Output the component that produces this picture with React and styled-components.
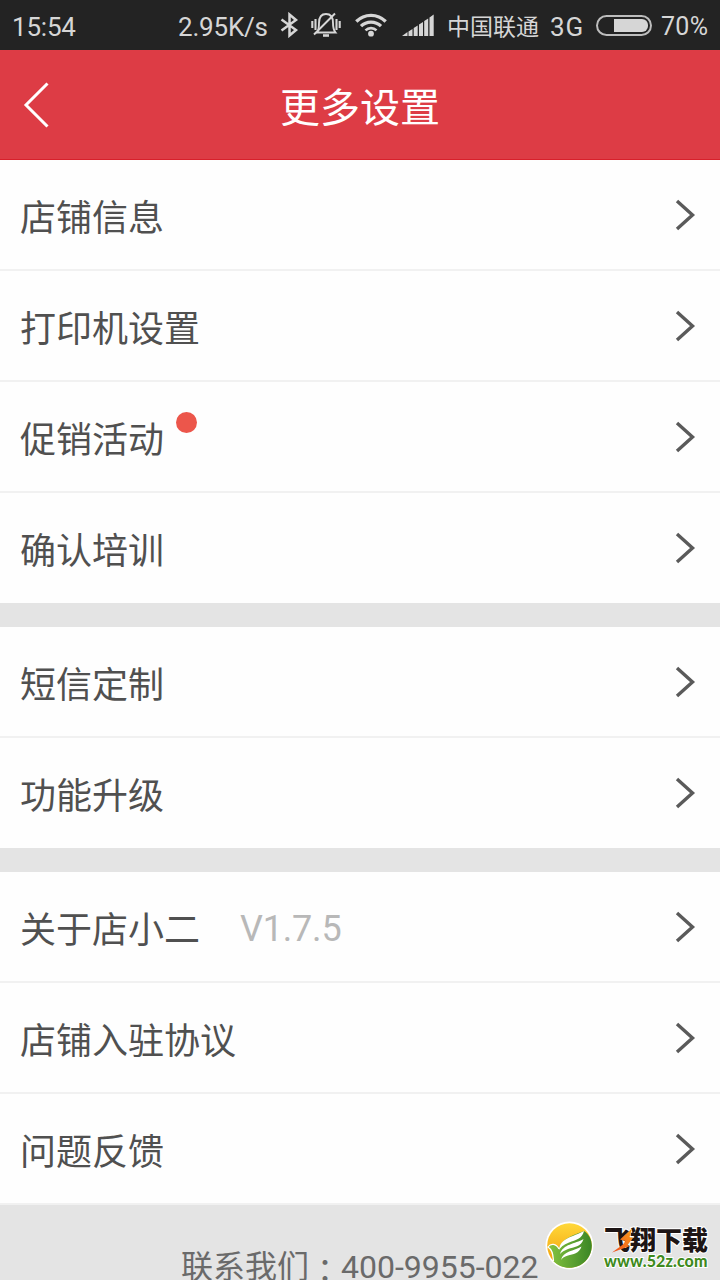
import styled, { createGlobalStyle } from "styled-components";

const GlobalStyle = createGlobalStyle`
  * {
    box-sizing: border-box;
  }
  body {
    margin: 0;
    background-color: #e4e4e4;
  }
`;

const Container = styled.div`
  position: relative;
  display: flex;
  flex-direction: column;
  width: 720px;
  height: 1280px;
  overflow: hidden;
  background-color: #e4e4e4;
  font-family: Roboto, "Noto Sans CJK SC", sans-serif;
  color: #505050;
`;

const StatusBar = styled.div`
  display: flex;
  align-items: center;
  flex-shrink: 0;
  height: 50px;
  padding-left: 12px;
  background-color: #232323;
  color: #d6d6d6;
`;

const StatusText = styled.span`
  flex-shrink: 0;
  width: ${(props) => props.$width}px;
  padding-top: ${(props) => props.$drop || 0}px;
  font-size: ${(props) => props.$size || 26}px;
  letter-spacing: ${(props) => props.$spacing || 0}px;
  line-height: 30px;
  white-space: nowrap;
`;

const StatusIcon = styled.svg`
  flex-shrink: 0;
  margin-right: ${(props) => props.$gap}px;
`;

const Battery = styled.div`
  display: flex;
  justify-content: flex-end;
  flex-shrink: 0;
  width: 56px;
  height: 21px;
  margin-right: 9px;
  padding: 2px;
  border: 2px solid #bdbdbd;
  border-radius: 11px;
`;

const BatteryLevel = styled.div`
  width: 34px;
  height: 13px;
  background-color: #d6d6d6;
  border-radius: 0 6px 6px 0;
`;

const Header = styled.header`
  display: grid;
  grid-template-columns: 100px 1fr 100px;
  align-items: center;
  flex-shrink: 0;
  height: 110px;
  background-color: #dd3c45;
  border-bottom: 1px solid #d8202b;
  color: white;
`;

const BackButton = styled.button`
  display: flex;
  border: none;
  padding: 0 0 0 22px;
  background: none;
  cursor: pointer;
`;

const Title = styled.h1`
  margin: 0;
  padding-top: 8px;
  font-size: 40px;
  font-weight: 400;
  line-height: 60px;
  text-align: center;
`;

const Group = styled.div`
  flex-shrink: 0;
  margin-bottom: ${(props) => (props.$last ? 0 : 24)}px;
  background-color: #fefefe;
`;

const Row = styled.div`
  display: flex;
  align-items: center;
  height: ${(props) => props.$height}px;
  padding: 0 24px 0 20px;
  border-bottom: ${(props) => (props.$line ? "2px solid #f1f1f1" : "none")};
`;

const Label = styled.span`
  padding-top: 8px;
  font-size: 36px;
  line-height: 54px;
`;

const Dot = styled.i`
  align-self: flex-start;
  width: 21px;
  height: 21px;
  margin: 30px 0 0 12px;
  border-radius: 50%;
  background-color: #ec564b;
`;

const Version = styled.span`
  margin-left: 40px;
  padding-top: 4px;
  font-size: 36px;
  letter-spacing: -0.2px;
  color: #b8b8b8;
`;

const Arrow = styled.svg`
  margin-left: auto;
`;

const Contact = styled.div`
  display: flex;
  padding-left: 181px;
  font-size: 32px;
  line-height: 48px;
  color: #6a6a6a;
  white-space: nowrap;
`;

const ContactLabel = styled.span`
  padding-top: 38px;
`;

const Colon = styled.span`
  padding-top: 39px;
  font-family: "Noto Sans CJK TC", sans-serif;
`;

const Phone = styled.span`
  padding-top: 38px;
`;

const Watermark = styled.div`
  position: absolute;
  left: 545px;
  top: 1221px;
  display: flex;
`;

const WatermarkText = styled.div`
  display: flex;
  flex-direction: column;
  margin-left: 10px;
  padding-top: 5px;
`;

const SiteName = styled.div`
  position: relative;
  height: 26px;
  font-family: "Noto Sans CJK SC", sans-serif;
  font-size: 26px;
  font-weight: 900;
  line-height: 26px;
  color: #1d1515;
  white-space: nowrap;
  paint-order: stroke fill;
  -webkit-text-stroke: 2px white;
`;

const Flash = styled.svg`
  position: absolute;
  left: 7px;
  top: 2px;
`;

const SiteUrl = styled.div`
  font-family: Lato, sans-serif;
  font-size: 16px;
  font-weight: 900;
  line-height: 18px;
  letter-spacing: 0.1px;
  color: #3f8a1d;
  white-space: nowrap;
  paint-order: stroke fill;
  -webkit-text-stroke: 2px white;
`;

const groups = [
  [
    { label: "店铺信息", height: 111, line: true },
    { label: "打印机设置", height: 111, line: true },
    { label: "促销活动", height: 111, line: true, dot: true },
    { label: "确认培训", height: 110 },
  ],
  [
    { label: "短信定制", height: 111, line: true },
    { label: "功能升级", height: 110 },
  ],
  [
    { label: "关于店小二", height: 111, line: true, version: "V1.7.5" },
    { label: "店铺入驻协议", height: 111, line: true },
    { label: "问题反馈", height: 111, line: true },
  ],
];

const StatusIcons = () => (
  <>
    <StatusIcon $gap={12} width="19" height="26" viewBox="0 0 19 26" fill="none" stroke="#d6d6d6" strokeWidth="2.5">
      <path d="M1.5 7.5 L16 18 L9.5 23.5 V2.5 L16 8 L1.5 18.5" />
    </StatusIcon>
    <StatusIcon $gap={14} width="30" height="26" viewBox="0 0 30 26" fill="none" stroke="#d6d6d6" strokeWidth="1.9">
      <path d="M6 20.5 C8 18 8 16 8 11 C8 5 11 2 15 2 C19 2 22 5 22 11 C22 16 22.5 18 24.5 20.5 Z" />
      <path d="M3 22.5 L24 1.5" />
      <path d="M12 23.5 H18" strokeWidth="2.6" />
      <path d="M1.3 9 V16 M4.5 7 V18 M25.5 7 V18 M28.7 9 V16" strokeWidth="2.1" />
    </StatusIcon>
    <StatusIcon $gap={15} width="32" height="24" viewBox="0 0 32 24" fill="none" stroke="#d6d6d6" strokeWidth="3.3">
      <path d="M1.3 8.5 C9.5 0.3 22.5 0.3 30.7 8.5" />
      <path d="M6 13.2 C11.5 7.7 20.5 7.7 26 13.2" />
      <path d="M10.5 17.4 C13.5 14.3 18.5 14.3 21.5 17.4" strokeWidth="2.6" />
      <circle cx="16" cy="20.7" r="2.9" fill="#d6d6d6" stroke="none" />
    </StatusIcon>
    <StatusIcon $gap={13} width="32" height="22" viewBox="0 0 32 22" fill="#d6d6d6">
      <path d="M0 22 L5.5 18 V22 Z M6.5 17.5 L10.5 15 V22 H6.5 Z M11.7 14 L15.7 11.5 V22 H11.7 Z M17 10.5 L21 8 V22 H17 Z M22.2 7 L26.2 4.5 V22 H22.2 Z M27.5 3.5 L31.7 0.5 V22 H27.5 Z" />
    </StatusIcon>
  </>
);

const Logo = () => (
  <svg width="49" height="49" viewBox="0 0 49 49">
    <defs>
      <linearGradient id="sun" x1="0" y1="0" x2="0" y2="1">
        <stop offset="0" stopColor="#ffd83a" />
        <stop offset="1" stopColor="#f19a05" />
      </linearGradient>
      <linearGradient id="leaf" x1="0" y1="0" x2="1" y2="0">
        <stop offset="0" stopColor="#86c440" />
        <stop offset="1" stopColor="#3b8625" />
      </linearGradient>
      <linearGradient id="flash" x1="1" y1="0" x2="0" y2="1">
        <stop offset="0" stopColor="#f9a11b" />
        <stop offset="1" stopColor="#ee4a1c" />
      </linearGradient>
    </defs>
    <circle cx="24.5" cy="24.5" r="24" fill="white" />
    <circle cx="24.5" cy="24.5" r="22.3" fill="url(#sun)" />
    {/* bird body, running down into the leaf */}
    <path d="M3 26 C6 22 11 22.5 14 28 C16 18 26 15 39 10 C44 13 46.8 19 46.8 24.5 C46.8 37 37 46.8 24.5 46.8 C18 46.8 12 44 8.5 40 C8 35 8 29 3 26 Z" fill="url(#leaf)" />
    <path d="M8.5 40 C8 35 8 29 3 26 C6 22 11 22.5 14 28" fill="none" stroke="white" strokeWidth="1.2" />
    {/* feathers */}
    <path d="M14 29 C15 17 28 16 39 10 C37 18 31 19 24 21.5 C18 24 16 26 14 29 Z" fill="white" />
    <path d="M15 33 C18 23 30 23 38.5 18 C36 26 29 26 23 28 C19 29.5 17 31 15 33 Z" fill="white" />
    <path d="M16 39 C18 30 29 30 36.5 25.5 C34 33 28 33 23 34.5 C19 36 17 37 16 39 Z" fill="white" />
  </svg>
);

const App = () => {
  return (
    <Container>
      <GlobalStyle />
      <StatusBar>
        <StatusText $width={166} $drop={3} $spacing={-0.2}>15:54</StatusText>
        <StatusText $width={102} $drop={3} $spacing={-0.2}>2.95K/s</StatusText>
        <StatusIcons />
        <StatusText $width={103} $size={23} $drop={6}>中国联通</StatusText>
        <StatusText $width={46} $drop={3} $spacing={0.8}>3G</StatusText>
        <Battery>
          <BatteryLevel />
        </Battery>
        <StatusText $width={50} $size={25} $drop={3} $spacing={0.3}>70%</StatusText>
      </StatusBar>
      <Header>
        <BackButton aria-label="返回">
          <svg width="28" height="46" viewBox="0 0 28 46" fill="none" stroke="white" strokeWidth="3">
            <path d="M25.5 1.5 L4 23 L25.5 44.5" />
          </svg>
        </BackButton>
        <Title>更多设置</Title>
      </Header>
      {groups.map((rows, i) => (
        <Group key={i} $last={i === groups.length - 1}>
          {rows.map((row) => (
            <Row key={row.label} $height={row.height} $line={row.line}>
              <Label>{row.label}</Label>
              {row.dot && <Dot />}
              {row.version && <Version>{row.version}</Version>}
              <Arrow width="21" height="32" viewBox="0 0 21 32" fill="none" stroke="#5a5a5a" strokeWidth="3.4">
                <path d="M2 2 L17.5 16 L2 30" />
              </Arrow>
            </Row>
          ))}
        </Group>
      ))}
      <Contact>
        <ContactLabel>联系我们</ContactLabel>
        <Colon lang="zh-TW">：</Colon>
        <Phone>400-9955-022</Phone>
      </Contact>
      <Watermark>
        <Logo />
        <WatermarkText>
          <SiteName>
            飞翔下载
            <Flash width="23" height="25" viewBox="0 0 23 25">
              <path d="M21 0.5 L18.5 9 L22 10 L16.5 17 L19 18 L1 24.5 L12 16.5 L14.5 13 L9 11.5 Z" fill="url(#flash)" />
            </Flash>
          </SiteName>
          <SiteUrl>www.52z.com</SiteUrl>
        </WatermarkText>
      </Watermark>
    </Container>
  );
};

export default App;
